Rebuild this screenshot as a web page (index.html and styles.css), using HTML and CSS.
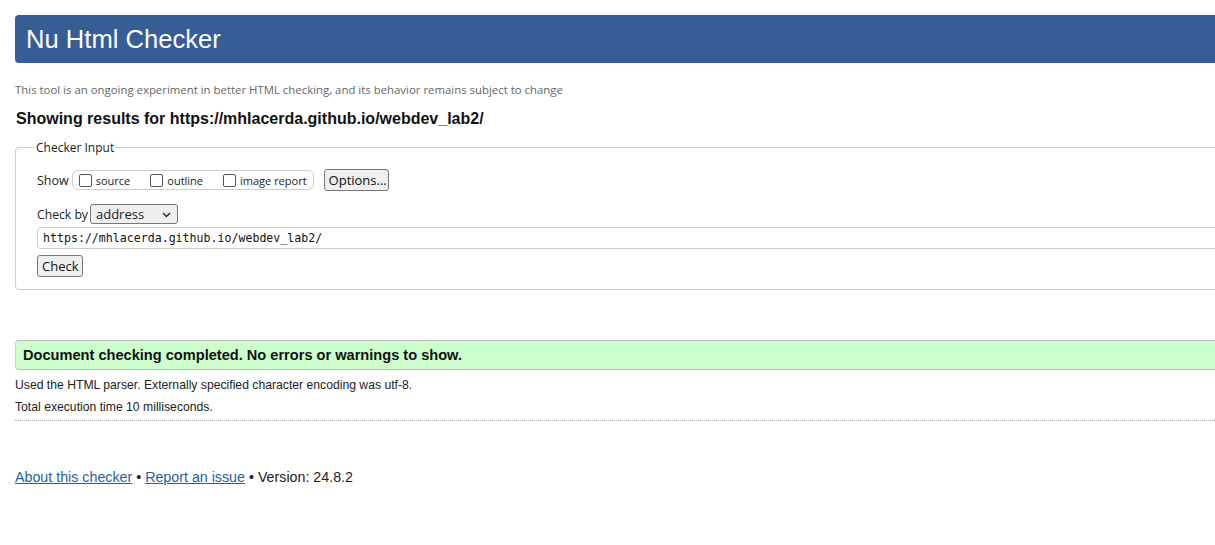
FILE: index.html
```html
<!DOCTYPE html>
<html>
<head>
<meta charset="utf-8">
<title>Nu Html Checker</title>
<link rel="stylesheet" href="styles.css">
</head>
<body>
<div class="page">
  <h1 class="header">Nu Html Checker</h1>
  <p class="notice">This tool is an ongoing experiment in better HTML checking, and its behavior remains subject to change</p>
  <h2 class="showing">Showing results for https://mhlacerda.github.io/webdev_lab2/</h2>
  <fieldset class="input-box">
    <legend class="legend">Checker Input</legend>
    <div class="show-row">
      <span class="lbl">Show</span>
      <span class="pill">
        <label class="opt"><span class="cb"></span>source</label>
        <label class="opt"><span class="cb"></span>outline</label>
        <label class="opt"><span class="cb"></span>image report</label>
      </span>
      <span class="btn btn-opt">Options...</span>
    </div>
    <div class="by-row">
      <span class="lbl lbl-by">Check by</span>
      <span class="select">address<svg class="chev" width="9" height="6" viewBox="0 0 9 6"><path d="M1 1 L4.5 4.5 L8 1" fill="none" stroke="#222" stroke-width="1.3"/></svg></span>
    </div>
    <div class="url">https://mhlacerda.github.io/webdev_lab2/</div>
    <span class="btn btn-check">Check</span>
  </fieldset>
  <div class="success">Document checking completed. No errors or warnings to show.</div>
  <div class="detail-list">
    <p class="details">Used the HTML parser. Externally specified character encoding was utf-8.</p>
    <p class="details">Total execution time 10 milliseconds.</p>
  </div>
  <div class="dots"></div>
  <p class="footer"><a href="#">About this checker</a> • <a href="#">Report an issue</a> • Version: 24.8.2</p>
</div>
</body>
</html>
```

FILE: styles.css
```css
html, body {
  margin: 0;
  padding: 0;
  overflow: hidden;
  background: #fff;
}
body {
  font-family: "Liberation Sans", Arial, sans-serif;
  color: #222;
}
.page {
  width: 1300px;
  padding: 15px 0 0 15px;
}
.header {
  margin: 0;
  height: 48px;
  box-sizing: border-box;
  background: #365d95;
  color: #fff;
  border-radius: 4px;
  font-weight: normal;
  font-size: 25.6px;
  line-height: 48px;
  padding-left: 11px;
}
.notice {
  margin: 19px 0 0 0;
  font-family: "Open Sans", "Noto Sans", sans-serif;
  font-size: 11.4px;
  color: #666;
  line-height: 16px;
}
.showing {
  margin: 11px 0 0 1px;
  font-size: 16px;
  font-weight: bold;
  color: #111;
  line-height: 20px;
}
.input-box {
  margin: 10px 0 0 0;
  border: 1px solid #ccc;
  border-radius: 4px;
  padding: 12px 20px 12px 21px;
  font-family: "Open Sans", "Noto Sans", sans-serif;
  font-size: 12px;
  color: #222;
}
.legend {
  padding: 0 1px;
  margin-left: -2px;
  font-size: 12px;
}
.show-row {
  display: flex;
  align-items: center;
  height: 24px;
}
.lbl {
  font-size: 12.5px;
  margin-right: 3px;
}
.lbl-by {
  font-size: 12.2px;
  margin-right: 2px;
}
.pill {
  display: flex;
  align-items: center;
  border: 1px solid #ccc;
  border-radius: 6px;
  height: 18px;
  padding: 0 6px 0 6px;
  gap: 20px;
}
.opt {
  display: flex;
  align-items: center;
  font-size: 11px;
  gap: 4px;
}
.cb {
  width: 11px;
  height: 11px;
  border: 1px solid #555;
  border-radius: 2px;
  background: #fff;
}
.btn {
  display: inline-block;
  box-sizing: border-box;
  background: #efefef;
  border: 1px solid #767676;
  border-radius: 3px;
  font-size: 13px;
  height: 22px;
  line-height: 20px;
  padding: 0 4px;
  color: #111;
}
.btn-opt {
  margin-left: 10px;
  width: 65px;
}
.by-row {
  display: flex;
  align-items: center;
  margin-top: 12px;
}
.select {
  display: flex;
  align-items: center;
  justify-content: space-between;
  box-sizing: border-box;
  width: 88px;
  height: 20px;
  padding: 0 6px 0 5px;
  border: 1px solid #767676;
  border-radius: 3px;
  background: #efefef;
  font-size: 13px;
}
.chev {
  margin-top: 1px;
}
.url {
  margin-top: 3px;
  border: 1px solid #ccc;
  border-radius: 4px;
  height: 20px;
  line-height: 20px;
  padding-left: 5px;
  font-family: "DejaVu Sans Mono", "Liberation Mono", monospace;
  font-size: 11.6px;
  color: #111;
}
.btn-check {
  margin-top: 6px;
  width: 46px;
}
.success {
  margin-top: 50px;
  background: #ccffcc;
  border-top: 1px solid #bbb;
  border-bottom: 1px solid #bbb;
  border-left: 1px solid #ccc;
  border-radius: 4px;
  height: 28px;
  line-height: 28px;
  padding-left: 7px;
  font-size: 14.6px;
  font-weight: bold;
  color: #111;
}
.detail-list {
  margin-top: 4px;
}
.details {
  margin: 0;
  font-size: 12.2px;
  line-height: 22px;
  color: #222;
}
.dots {
  border-top: 1px dotted #aaa;
  margin-top: 2px;
}
.footer {
  margin: 48px 0 0 0;
  font-size: 14.25px;
  color: #222;
}
.footer a {
  color: #1d5fae;
  text-decoration: underline;
}
```
